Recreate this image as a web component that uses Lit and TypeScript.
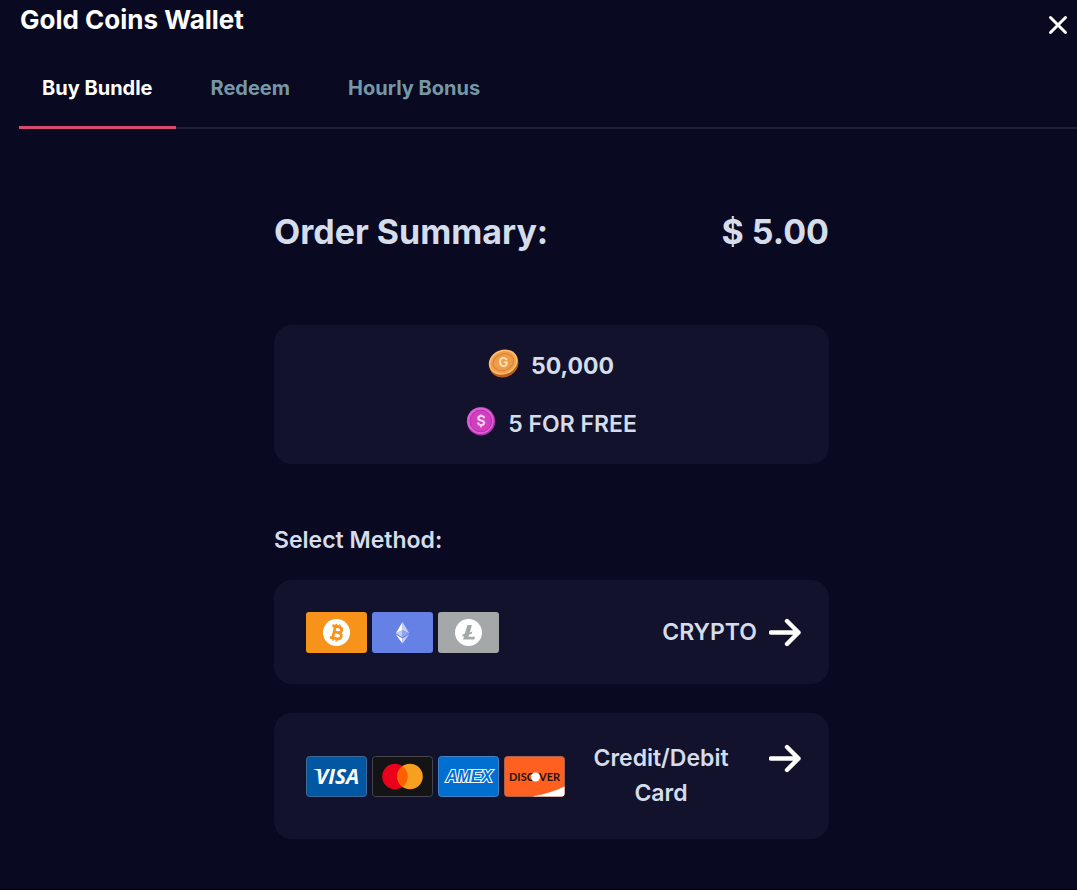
import { LitElement, html, css, svg } from "lit";
import { customElement, state } from "lit/decorators.js";

const bitcoin = svg`<svg class="logo" viewBox="0 0 61 41" aria-hidden="true">
  <rect width="61" height="41" rx="3" fill="#f7931a"/>
  <circle cx="30.500" cy="20.500" r="13.500" fill="#fff"/>
  <g transform="rotate(12 30.5 20.5)" fill="none" stroke="#f7931a" stroke-width="2.700">
    <path d="M28 14.500V26.500M25 14.500h6.500c4.800 0 4.800 5.800 0 5.800H28M31.500 20.300c6 0 6 6.200 0 6.200H25"/>
    <path d="M28.700 12v2.500M32 12v2.500M28.700 26.500v2.700M32 26.500v2.700" stroke-width="1.700"/>
  </g></svg>`;

const ethereum = svg`<svg class="logo" viewBox="0 0 61 41" aria-hidden="true">
  <rect width="61" height="41" rx="3" fill="#6681e6"/>
  <path d="M30.500 10v8.200l-6.700 3z" fill="#fff"/>
  <path d="M30.500 10v8.200l6.700 3z" fill="#c4cff8"/>
  <path d="M23.800 21.200l6.700-3v7z" fill="#c4cff8"/>
  <path d="M37.200 21.200l-6.700-3v7z" fill="#8fa3f0"/>
  <path d="M23.800 22.600l6.700 4v4.800z" fill="#fff"/>
  <path d="M37.200 22.600l-6.700 4v4.800z" fill="#c4cff8"/></svg>`;

const litecoin = svg`<svg class="logo" viewBox="0 0 61 41" aria-hidden="true">
  <rect width="61" height="41" rx="3" fill="#a5a8a9"/>
  <circle cx="30.500" cy="20.500" r="13.500" fill="#fff"/>
  <path d="M29.500 13h4.400l-2.100 7.400 2.600-1-.7 2.300-2.600 1-.6 2.100h6.600l-.8 2.700H25.100l1-3.600-2 .8.700-2.300 2-.8z" fill="#a5a8a9"/></svg>`;

const visa = svg`<svg class="logo" viewBox="0 0 61 41" role="img" aria-label="Visa">
  <rect x=".5" y=".5" width="60" height="40" rx="3" fill="#0157a2" stroke="#3c6a9b"/>
  <path d="M7 13h6.500l2.500 6c-2-3-4.500-5-9-6z" fill="#fff"/>
  <text x="31.500" y="28" text-anchor="middle" class="visa">VISA</text></svg>`;

const mastercard = svg`<svg class="logo" viewBox="0 0 61 41" aria-hidden="true">
  <rect x=".5" y=".5" width="60" height="40" rx="3" fill="#141414" stroke="#45454f"/>
  <circle cx="23" cy="20.500" r="12.800" fill="#eb001b"/>
  <circle cx="38" cy="20.500" r="12.800" fill="#f7a020"/>
  <path d="M30.500 10.130a12.800 12.800 0 0 1 0 20.740a12.800 12.800 0 0 1 0-20.740z" fill="#ff5f00"/></svg>`;

const amex = svg`<svg class="logo" viewBox="0 0 61 41" role="img" aria-label="Amex">
  <rect x=".5" y=".5" width="60" height="40" rx="3" fill="#016fd0" stroke="#3f83c4"/>
  <text x="31" y="26" text-anchor="middle" class="amex">AMEX</text></svg>`;

const discover = svg`<svg class="logo" viewBox="0 0 61 41" role="img" aria-label="Discover">
  <rect x=".5" y=".5" width="60" height="40" rx="3" fill="#ff6020" stroke="#a8614e"/>
  <path d="M28 40.500C40 38.500 51 35 60.500 30.500v7a3 3 0 0 1-3 3z" fill="#fff"/>
  <text x="5" y="25" class="discover">DISC</text>
  <text x="35" y="25" class="discover">VER</text>
  <circle cx="31.500" cy="21" r="4.500" fill="#fff"/></svg>`;

const goldCoin = svg`<svg class="coin" viewBox="0 0 30 30" aria-hidden="true">
  <g transform="rotate(-22 15 15)">
    <ellipse cx="14.700" cy="15.500" rx="14.800" ry="12.500" fill="#b9601f"/>
    <ellipse cx="15" cy="13" rx="14.800" ry="12.300" fill="#f3a04b"/>
    <ellipse cx="15" cy="13" rx="13.800" ry="11.300" fill="none" stroke="#ffc878" stroke-width="1"/>
    <ellipse cx="15" cy="13" rx="10.500" ry="8.300" fill="#ee9c45" stroke="#d08340" stroke-width="1"/>
  </g>
  <text x="14.500" y="18" text-anchor="middle" class="glyph gold">G</text></svg>`;

const pinkCoin = svg`<svg class="coin" viewBox="0 0 30 30" aria-hidden="true">
  <circle cx="15" cy="14.200" r="14.200" fill="#a92fa9"/>
  <circle cx="14.500" cy="13.700" r="13.300" fill="#dc62d2"/>
  <circle cx="14.800" cy="14" r="10.800" fill="#cf3fc0" stroke="#b52fac" stroke-width="1"/>
  <text x="15" y="19" text-anchor="middle" class="glyph pink">S</text>
  <path d="M15 7.500v2M15 18v2.500" stroke="#ffd3f3" stroke-width="1.500"/></svg>`;

const arrow = svg`<svg class="arrow" viewBox="0 0 33 35" aria-hidden="true">
  <path d="M2 17.500H29.500M18 6L29.500 17.500L18 29" /></svg>`;

const tabs = ["Buy Bundle", "Redeem", "Hourly Bonus"];

const methods = [
  { label: "CRYPTO", logos: [bitcoin, ethereum, litecoin] },
  { label: "Credit/Debit Card", logos: [visa, mastercard, amex, discover] },
];

@customElement("app-root")
export class AppRoot extends LitElement {
  @state() private active = 0;

  static styles = css`
    :host {
      display: block;
      box-sizing: border-box;
      min-height: 100vh;
      background: #090922;
      border-bottom: 1px solid #000;
      color: #d5dcea;
      font-family: Inter, sans-serif;
      font-weight: 600;
    }
    button {
      font: inherit;
      color: inherit;
      background: none;
      border: 0;
      padding: 0;
      cursor: pointer;
    }
    h1, h2, p { margin: 0; font-weight: inherit; }
    .header {
      display: flex;
      justify-content: space-between;
      align-items: flex-start;
      padding: 4px 8px 0 20px;
    }
    .title {
      color: #fff;
      font-size: 26px;
      line-height: 32px;
      font-weight: 700;
    }
    .close { padding-top: 10px; line-height: 0; }
    .close svg { width: 22px; height: 22px; }
    .close path, .arrow path {
      fill: none;
      stroke: #fff;
      stroke-linecap: round;
      stroke-linejoin: round;
    }
    .close path { stroke-width: 3; }
    .tabs {
      display: flex;
      gap: 12px;
      margin: 14px 0 0 19px;
      box-shadow: inset 0 -2px #1f2338;
    }
    .tab {
      padding: 25px 23px;
      border-bottom: 3px solid transparent;
      color: #7698a6;
      font-size: 20px;
      line-height: 26px;
      font-weight: 700;
    }
    .tab.on { color: #fff; border-color: #d94a70; }
    .main {
      max-width: 555px;
      margin: 0 auto;
      padding: 78px 0 48px;
    }
    .content { padding: 0 24px 0 50px; }
    .summary {
      display: flex;
      justify-content: space-between;
      font-size: 34px;
      line-height: 50px;
      font-weight: 700;
    }
    .card {
      box-sizing: border-box;
      width: 100%;
      border-radius: 18px;
      background: #12122c;
      font-size: 23px;
      line-height: 35px;
    }
    .bundle {
      display: flex;
      flex-direction: column;
      align-items: center;
      gap: 23px;
      margin-top: 68px;
      padding: 24px 23px 22px;
    }
    .item { display: flex; gap: 12px; }
    .amount { font-weight: 700; }
    .coin { width: 30px; height: 30px; overflow: visible; }
    .glyph { font: 700 13px Inter, sans-serif; }
    .gold { fill: #ffe0b8; }
    .pink { fill: #ffd3f3; font-size: 14px; }
    .heading {
      margin: 59px 0 22px;
      font-size: 23px;
      line-height: 35px;
    }
    .methods { display: flex; flex-direction: column; gap: 29px; }
    .method {
      display: flex;
      justify-content: space-between;
      align-items: center;
      min-height: 104px;
      padding: 28px 27px 28px 32px;
    }
    .logos { display: flex; flex: none; gap: 5px; }
    .logo { width: 61px; height: 41px; }
    .visa { font: italic 700 21px "Open Sans", sans-serif; fill: #fff; }
    .amex {
      font: italic 700 16px "Liberation Sans", sans-serif;
      fill: #016fd0;
      stroke: #fff;
      stroke-width: 2px;
      paint-order: stroke;
    }
    .discover { font: 700 11px Lato, sans-serif; fill: #1c1210; }
    .action { display: flex; align-items: flex-start; gap: 12px; }
    .arrow { flex: none; width: 33px; height: 35px; }
    .arrow path { stroke-width: 4.4; }
  `;

  render() {
    return html`
      <header class="header">
        <h1 class="title">Gold Coins Wallet</h1>
        <button class="close" aria-label="Close">
          <svg viewBox="0 0 22 22"><path d="M3.500 3.500l15 15M18.500 3.500l-15 15" /></svg>
        </button>
      </header>
      <nav class="tabs" role="tablist">
        ${tabs.map(
          (t, i) => html`<button
            role="tab"
            class=${i === this.active ? "tab on" : "tab"}
            aria-selected=${i === this.active ? "true" : "false"}
            @click=${() => (this.active = i)}
          >${t}</button>`
        )}
      </nav>
      <div class="content">
        <main class="main">
          <h2 class="summary"><span>Order Summary:</span><span>$ 5.00</span></h2>
          <section class="card bundle">
            <p class="item">${goldCoin}<span class="amount">50,000</span></p>
            <p class="item">${pinkCoin}<span>5 FOR FREE</span></p>
          </section>
          <h2 class="heading">Select Method:</h2>
          <div class="methods">
            ${methods.map(
              (m) => html`<button class="card method">
                <span class="logos">${m.logos}</span>
                <span class="action"><span>${m.label}</span>${arrow}</span>
              </button>`
            )}
          </div>
        </main>
      </div>
    `;
  }
}
